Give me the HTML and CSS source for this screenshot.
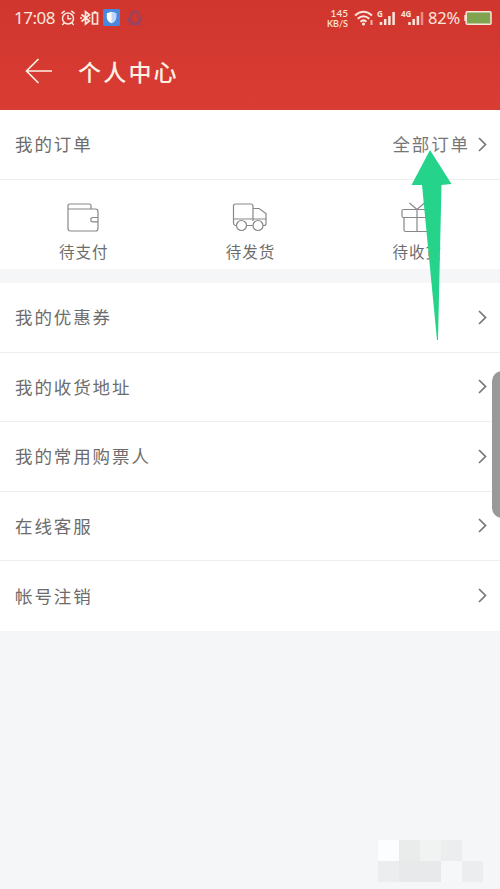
FILE: index.html
```html
<!DOCTYPE html>
<html lang="zh-CN">
<head>
<meta charset="utf-8">
<title>个人中心</title>
<link rel="stylesheet" href="styles.css">
</head>
<body>
<div class="screen">
  <header class="header">
    <div class="status">
      <span class="time">17:08</span>
      <svg class="alarm" width="14" height="16" viewBox="0 0 14 16"><g fill="none" stroke="#fbe6dc" stroke-width="1.5" stroke-linecap="round"><circle cx="7" cy="8.5" r="5.5"/><path d="M7 5.5v3.3h2.8M1 3.2L3.400 1.200M13 3.200L10.600 1.200M3 13.200l-1.400 1.300M11 13.200l1.400 1.300"/></g></svg>
      <svg class="bluetooth" width="19" height="16" viewBox="0 0 19 16"><g fill="none" stroke="#fbe6dc" stroke-width="1.7"><path d="M1.500 4.500L9.500 11l-4 3V1.700l4 3L1.500 11.500M0 8h2M9 8h1.500M12.500 3h5v11h-5zM13.600 2.200h2.800"/></g></svg>
      <svg class="shield" width="17" height="17" viewBox="0 0 18 18"><rect width="18" height="18" rx="1.5" fill="#4a87de"/><path d="M9 3l5 1.500v4.300c0 3.200-2.200 5-5 6.400-2.800-1.400-5-3.200-5-6.400V4.500z" fill="#fff"/><path d="M9 3l5 1.500v4.300c0 3.200-2.200 5-5 6.400z" fill="#bdd7fa"/></svg>
      <svg class="qq" width="16" height="18" viewBox="0 0 16 18"><path d="M8 2.500c-3 0-4 2-4 4.500C2.800 8.500 2 10 2 11.800l1.700-.5c.3 1 .8 1.700 1.500 2.200l-1 1.300h7.600l-1-1.300c.7-.5 1.200-1.200 1.500-2.200l1.700.5c0-1.800-.8-3.300-2-4.800 0-2.500-1-4.500-4-4.500z" fill="none" stroke="#944465" stroke-width="2.2"/></svg>
      <span class="spacer"></span>
      <span class="speed"><span>145</span><span>KB/S</span></span>
      <svg class="wifi" width="21" height="16" viewBox="0 0 21 16"><g fill="none" stroke="#fbe6dc" stroke-width="2"><path d="M1 5.500q8.500-7.500 17 0M3.700 8.700q5.800-5 11.600 0M6.500 11.700q3-2.600 6 0"/></g><circle cx="9.500" cy="14" r="1.600" fill="#fbe6dc"/><path d="M17.500 10v5" stroke="#f3b6ac" stroke-width="2"/></svg>
      <svg class="signal" width="19" height="17" viewBox="0 0 19 17"><text x="0" y="8" class="net">G</text><path d="M4 16v-3M8.200 16v-6M12.400 16V7M16.600 16V3" stroke="#fbe6dc" stroke-width="2.500"/></svg>
      <svg class="signal-4g" width="23" height="17" viewBox="0 0 23 17"><text x="0" y="8" class="net">4G</text><path d="M8.500 16v-3M12.700 16v-6M16.900 16V7" stroke="#fbe6dc" stroke-width="2.500"/><path d="M21 16V3" stroke="#ed8c84" stroke-width="2.500"/></svg>
      <span class="percent">82%</span>
      <svg class="battery" width="28" height="14" viewBox="0 0 28 14"><path d="M2.500 4H.3v6h2.200z" fill="#fbe6dc"/><rect x="2.200" y=".8" width="24.800" height="12.400" rx="1" fill="#7fa34e" stroke="#fbe6dc" stroke-width="1.500"/></svg>
    </div>
    <div class="nav">
      <svg class="back" width="28" height="26" viewBox="0 0 28 26"><path d="M13.500 1L1.500 13l12 12M1.500 13H27" fill="none" stroke="#fff0e4" stroke-width="1.700"/></svg>
      <h1 class="title">个人中心</h1>
    </div>
  </header>

  <section class="card">
    <div class="row"><span class="label">我的订单</span><span class="all">全部订单</span><svg class="chevron" viewBox="0 0 9 15"><path d="M1 1l6.500 6.500L1 14"/></svg></div>
    <div class="orders">
      <div class="order">
        <svg class="icon" width="36" height="30" viewBox="0 0 36 30"><path d="M3 7V4q0-2 2-2h19.500q1.500 0 1.500 1.500V7M3 7h27.500q2.500 0 2.500 2.500v17q0 2.500-2.500 2.500H5.500Q3 29 3 26.500zM33 15.500h-5a2.200 2.200 0 0 0 0 4.400h5"/></svg>
        <span class="caption">待支付</span>
      </div>
      <div class="order">
        <svg class="icon" width="36" height="30" viewBox="0 0 36 30"><path d="M4.500 23.500H3.500q-2-.5-2-2.500V4q0-2 2-2H19q2 0 2 2v15M21 6.500h6l7 5v10q0 2-2 2h-1.500M21 23.500h-6.500M1.500 17H34"/><circle cx="9.500" cy="23.500" r="5"/><circle cx="26" cy="23.500" r="5"/></svg>
        <span class="caption">待发货</span>
      </div>
      <div class="order">
        <svg class="icon" width="36" height="30" viewBox="0 0 36 30"><path d="M4.500 7.500h27q1.500 0 1.500 1.500v5q0 1.500-1.500 1.500h-27Q3 15.500 3 14V9q0-1.500 1.500-1.500zM5 15.500V28q0 1.500 1.500 1.500h23q1.500 0 1.500-1.500V15.500M18 7.500v22M10.500 1l7.500 6.500L25.500 1"/></svg>
        <span class="caption">待收货</span>
      </div>
    </div>
  </section>

  <section class="card menu">
    <div class="row"><span class="label">我的优惠券</span><svg class="chevron" viewBox="0 0 9 15"><path d="M1 1l6.500 6.500L1 14"/></svg></div>
    <div class="row"><span class="label">我的收货地址</span><svg class="chevron" viewBox="0 0 9 15"><path d="M1 1l6.500 6.500L1 14"/></svg></div>
    <div class="row"><span class="label">我的常用购票人</span><svg class="chevron" viewBox="0 0 9 15"><path d="M1 1l6.500 6.500L1 14"/></svg></div>
    <div class="row"><span class="label">在线客服</span><svg class="chevron" viewBox="0 0 9 15"><path d="M1 1l6.500 6.500L1 14"/></svg></div>
    <div class="row"><span class="label">帐号注销</span><svg class="chevron" viewBox="0 0 9 15"><path d="M1 1l6.500 6.500L1 14"/></svg></div>
  </section>

  <div class="handle"></div>
  <svg class="pointer" width="42" height="192" viewBox="0 0 42 192"><path d="M19 0L40.500 34 30.500 35 27 190 26 190 11 35 0.500 35z" fill="#25d48a"/></svg>
  <div class="mosaic">
    <i class="c1"></i><i class="c2"></i><i class="c3"></i><i class="c4"></i><i></i>
    <i class="c4"></i><i class="c5"></i><i class="c5"></i><i class="c6"></i><i class="c4"></i>
  </div>
</div>
</body>
</html>
```
FILE: styles.css
```css
* { box-sizing: border-box; }
body {
  margin: 0;
  background: #f5f6f8;
  font-family: Lato, "Noto Sans CJK SC", sans-serif;
  color: #6c6c6c;
}
svg { display: block; flex: none; overflow: visible; }
.screen { position: relative; width: 500px; height: 889px; overflow: hidden; }
.header { height: 110px; background: linear-gradient(#d0362e, #d93c33); color: #fbe6dc; }
.status { display: flex; align-items: center; height: 35px; padding: 0 8px 0 14px; }
.time { width: 47px; font: 17px/20px "Noto Sans", sans-serif; letter-spacing: -.5px; white-space: nowrap; }
.bluetooth { margin-left: 5px; }
.shield { margin-left: 4px; }
.qq { margin-left: 7px; }
.spacer { flex: 1; }
.speed { display: flex; flex-direction: column; align-items: flex-end; margin-right: 6px; font: 600 9px/9px Lato, sans-serif; }
.speed span:first-child { font-size: 10px; line-height: 12px; }
.signal { margin-left: 2px; }
.signal-4g { margin-left: 5px; }
.net { font: bold 8px "Noto Sans", sans-serif; fill: #fbe6dc; }
.percent { width: 36px; margin-left: 4px; font: 16.5px/20px "Noto Sans", sans-serif; letter-spacing: -.2px; white-space: nowrap; }
.nav { display: flex; align-items: center; height: 72px; padding-left: 25px; }
.title { margin: 0 0 0 25px; padding-top: 1px; font-size: 23px; line-height: 34px; font-weight: 500; letter-spacing: 2.2px; color: #fff0e4; }
.card { background: #fff; }
.row {
  display: flex;
  align-items: center;
  height: 70px;
  padding: 0 13px 0 15px;
  border-bottom: 1px solid #eeeff0;
}
.label { flex: 1; }
.label, .all { font-size: 17.5px; line-height: 28px; letter-spacing: 1.9px; padding-top: 1px; }
.all { margin-right: 8px; color: #777; }
.chevron { width: 9px; height: 15px; fill: none; stroke: #777; stroke-width: 1.7; }
.orders { display: grid; grid-template-columns: repeat(3, 1fr); height: 89px; padding-top: 22px; }
.order { display: flex; flex-direction: column; align-items: center; }
.icon { fill: none; stroke: #888; stroke-width: 1.2; }
.caption { margin-top: 8px; font-size: 15.5px; line-height: 24px; letter-spacing: 1px; padding-left: 1px; }
.menu { margin-top: 14px; }
.menu .row { height: 69.5px; }
.menu .label { padding-top: 2px; }
.menu .row:last-child { border-bottom: 0; }
.handle { position: absolute; left: 492px; top: 371px; width: 20px; height: 147px; border-radius: 10px; background: #999; }
.pointer { position: absolute; left: 410.5px; top: 150px; }
.mosaic { position: absolute; left: 378px; top: 840px; display: grid; grid-template: repeat(2, 21px) / repeat(5, 21px); }
.c1 { background: #fcfdfe; }
.c2 { background: #eaecec; }
.c3 { background: #f1f3f2; }
.c4 { background: #ecedef; }
.c5 { background: #e8e9eb; }
.c6 { background: #f6f7f9; }
```
